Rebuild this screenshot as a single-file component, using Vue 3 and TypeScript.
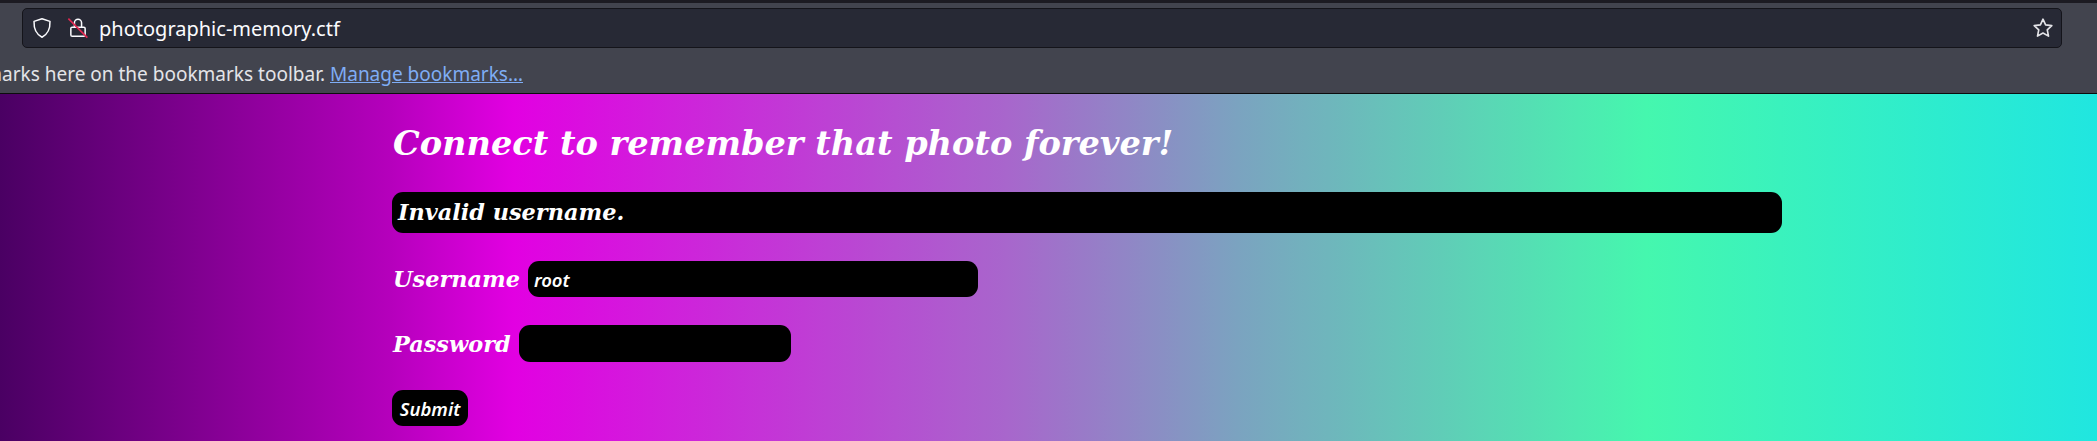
<script setup lang="ts">
const url = 'photographic-memory.ctf'
const username = 'root'
</script>

<template>
  <div class="page">
    <header class="chrome">
      <div class="nav">
        <div class="urlbar">
          <svg class="icon shield" viewBox="0 0 16 16" width="22" height="22" fill="none">
            <path d="M8 1.3 L13.8 3.2 C14 8.5 12.6 12.4 8 14.7 C3.4 12.4 2 8.5 2.2 3.2 Z" stroke="#fbfbfe" stroke-width="1.1" stroke-linejoin="round" />
          </svg>
          <svg class="icon lock" viewBox="0 0 16 16" width="22" height="22" fill="none">
            <path d="M5.4 7.4V4.2C5.4 2.8 6.6 1.6 8 1.6s2.6 1.2 2.6 2.6v3.2" stroke="#fbfbfe" stroke-width="1.1" />
            <path d="M3.8 7.4h8.4c.6 0 1 .4 1 1v4.6c0 .6-.4 1-1 1H3.8c-.6 0-1-.4-1-1V8.4c0-.6.4-1 1-1Z" stroke="#fbfbfe" stroke-width="1.1" />
            <path d="M1 1.2 14.8 15" stroke="#e22850" stroke-width="1.2" />
          </svg>
          <span class="url">{{ url }}</span>
          <svg class="icon star" viewBox="0 0 16 16" width="22" height="22" fill="none">
            <path d="M8 1.6 9.9 5.7 14.4 6.3 11.1 9.4 12 13.9 8 11.7 4 13.9 4.9 9.4 1.6 6.3 6.1 5.7Z" stroke="#e4e4e8" stroke-width="1.2" stroke-linejoin="round" />
          </svg>
        </div>
      </div>
      <div class="bookmarks">
        <div class="bookmarks-clip">
          <span class="bm-text">marks here on the bookmarks toolbar.&nbsp;<a class="bm-link">Manage bookmarks…</a></span>
        </div>
      </div>
    </header>

    <main class="content">
      <h2 class="title">Connect to remember that photo forever!</h2>
      <p class="error">Invalid username.</p>
      <form class="form" @submit.prevent>
        <div class="row">
          <label class="label">Username</label>
          <input class="field user" type="text" :value="username" />
        </div>
        <div class="row">
          <label class="label">Password</label>
          <input class="field pass" type="password" />
        </div>
        <div class="row">
          <button class="submit" type="submit">Submit</button>
        </div>
      </form>
    </main>
  </div>
</template>

<style>
html, body { margin: 0; padding: 0; overflow: hidden; }
</style>

<style scoped>
.page {
  width: 2097px;
  height: 441px;
  overflow: hidden;
  display: flex;
  flex-direction: column;
}
.chrome {
  height: 94px;
  flex: none;
  box-sizing: border-box;
  background: #42444e;
  border-bottom: 1px solid #0c0c0d;
  font-family: "Noto Sans", sans-serif;
}
.nav {
  height: 55px;
  box-sizing: border-box;
  padding: 8px 35px 0 22px;
  background: linear-gradient(#1c1b22 0, #1c1b22 3px, #42444e 3px);
}
.urlbar {
  height: 40px;
  box-sizing: border-box;
  display: flex;
  align-items: center;
  background: #272935;
  border: 1px solid #14141a;
  border-radius: 5px;
  padding: 0 7px 0 8px;
  color: #fbfbfe;
}
.icon { flex: none; display: block; }
.lock { margin-left: 14px; }
.url {
  margin-left: 10px;
  font-size: 20px;
  flex: 1;
}
.bookmarks {
  height: 38px;
  display: flex;
  overflow: hidden;
}
.bookmarks-clip {
  width: 523px;
  display: flex;
  justify-content: flex-end;
  overflow: hidden;
  flex: none;
  padding-top: 6px;
  height: 32px;
}
.bm-text {
  white-space: nowrap;
  font-size: 19px;
  line-height: 27px;
  color: #e4e4e8;
}
.bm-link {
  color: #7fadf5;
  text-decoration: underline;
}
.content {
  flex: 1;
  padding: 0 0 0 393px;
  color: #fff;
  font-family: "DejaVu Serif", serif;
  font-style: italic;
  font-weight: 700;
  background: linear-gradient(90deg, #4a0063 0%, #b500bc 18.6%, #e200e2 24.5%, #a866cc 48%, #7ba3c0 59%, #45f7ae 78.5%, #20e6e0 100%);
}
.title {
  margin: 30px 0 0;
  font-size: 33.6px;
  line-height: 39px;
}
.error {
  margin: 29px 0 0 -1px;
  width: 1390px;
  box-sizing: border-box;
  height: 41px;
  line-height: 41px;
  padding-left: 6px;
  background: #000;
  border-radius: 11px;
  font-size: 22.4px;
}
.form { display: flex; flex-direction: column; }
.row { display: flex; align-items: center; }
.row:nth-child(1) { margin-top: 28px; }
.row:nth-child(2) { margin-top: 28px; }
.row:nth-child(3) { margin-top: 28px; }
.label { font-size: 22.4px; margin-right: 8px; }
.field {
  border: none;
  outline: none;
  background: #000;
  color: #fff;
  border-radius: 11px;
  box-sizing: border-box;
  height: 36px;
  padding: 0 6px;
  font-family: "Noto Sans", sans-serif;
  font-style: italic;
  font-weight: 600;
  font-size: 18.5px;
}
.user { width: 450px; }
.pass { width: 272px; height: 37px; }
.submit {
  border: none;
  background: #000;
  color: #fff;
  border-radius: 11px;
  width: 76px;
  height: 36px;
  padding: 0;
  margin-left: -1px;
  font-family: "Noto Sans", sans-serif;
  font-style: italic;
  font-weight: 600;
  font-size: 18.5px;
}
</style>
